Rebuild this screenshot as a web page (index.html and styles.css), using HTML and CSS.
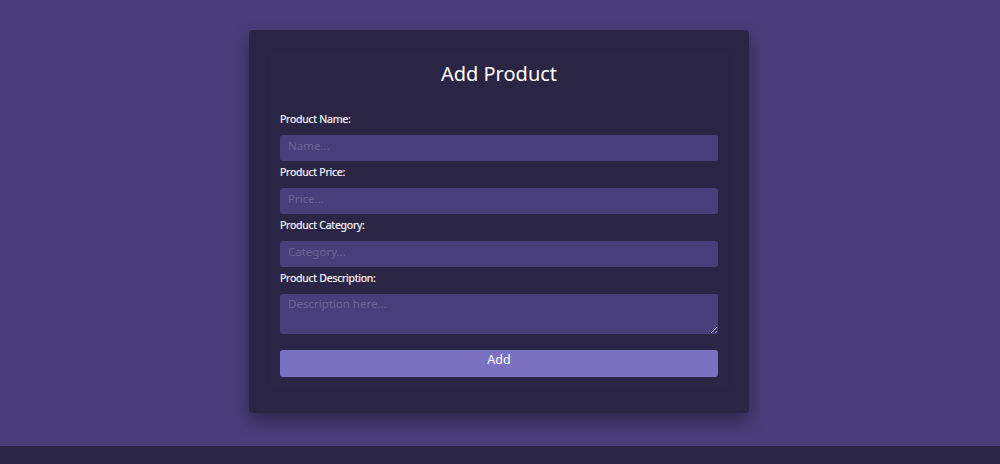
FILE: index.html
```html
<!DOCTYPE html>
<html lang="en">
<head>
<meta charset="utf-8">
<title>Add Product</title>
<link rel="stylesheet" href="styles.css">
</head>
<body>
<main class="page">
  <section class="card">
    <form class="form">
      <h2 class="title">Add Product</h2>
      <label class="label" for="name">Product Name:</label>
      <input class="field" id="name" type="text" placeholder="Name...">
      <label class="label" for="price">Product Price:</label>
      <input class="field" id="price" type="text" placeholder="Price...">
      <label class="label" for="category">Product Category:</label>
      <input class="field" id="category" type="text" placeholder="Category...">
      <label class="label" for="desc">Product Description:</label>
      <textarea class="field area" id="desc" placeholder="Description here..."></textarea>
      <button class="btn" type="button">Add</button>
    </form>
  </section>
</main>
<footer class="footer"></footer>
</body>
</html>
```
FILE: styles.css
```css
* { box-sizing: border-box; }
html, body { margin: 0; padding: 0; }
body {
  background: #483d78;
  font-family: "Noto Sans", "Open Sans", sans-serif;
  color: #ffffff;
}
.page {
  height: 446px;
  display: flex;
  justify-content: center;
  align-items: flex-start;
  padding-top: 30px;
}
.card {
  width: 500px;
  background: #2b2545;
  border-radius: 4px;
  padding: 23px 21px 26px;
  box-shadow: 0 8px 16px rgba(0, 0, 0, 0.35);
  margin-left: -2px;
}
.form {
  display: flex;
  flex-direction: column;
  padding: 10px;
  background: #2b2545;
  box-shadow: 0 0 6px rgba(0, 0, 0, 0.08);
}
.title {
  margin: -4px 0 22px;
  font-size: 20px;
  line-height: 30px;
  font-weight: 400;
  text-align: center;
  color: #ffffff;
}
.label {
  display: block;
  font-size: 10.5px;
  line-height: 16px;
  font-weight: 400;
  letter-spacing: -0.25px;
  margin: 3px 0 8px;
  color: #f4f2fa;
  -webkit-text-stroke: 0.2px #f4f2fa;
}
.title + .label { margin-top: 0; }
.field {
  width: 100%;
  height: 26px;
  border: none;
  border-radius: 3px;
  background: #483e7a;
  color: #ffffff;
  font-family: inherit;
  font-size: 11.5px;
  padding: 0 8px 5px;
  outline: none;
}
.field::placeholder { color: #6b6691; }
.area {
  height: 40px;
  padding: 2px 8px;
  resize: vertical;
}
.btn {
  margin-top: 16px;
  height: 27px;
  border: none;
  border-radius: 3px;
  background: #7b71c1;
  color: #ffffff;
  font-family: inherit;
  font-size: 12.5px;
  padding: 0 0 8px;
}
.footer {
  height: 18px;
  background: #2b2545;
}
```
